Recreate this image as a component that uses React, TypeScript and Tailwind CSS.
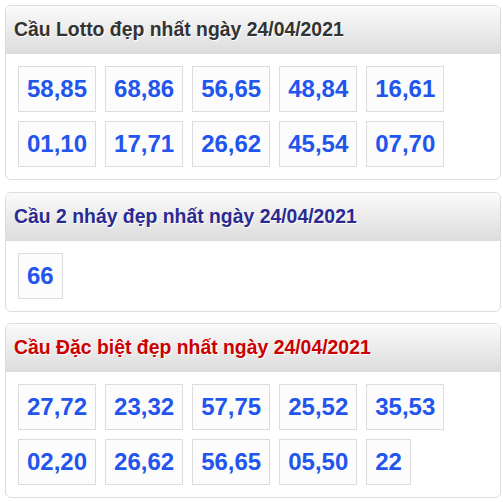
import React from 'react';

interface CauPanel {
  title: string;
  titleClass: string;
  numbers: string[];
  spacing: string;
}

const panels: CauPanel[] = [
  {
    title: 'Cầu Lotto đẹp nhất ngày 24/04/2021',
    titleClass: 'text-[#333333]',
    numbers: ['58,85', '68,86', '56,65', '48,84', '16,61', '01,10', '17,71', '26,62', '45,54', '07,70'],
    spacing: 'mb-[12px]',
  },
  {
    title: 'Cầu 2 nháy đẹp nhất ngày 24/04/2021',
    titleClass: 'text-[#2a2a92]',
    numbers: ['66'],
    spacing: 'mb-[11px]',
  },
  {
    title: 'Cầu Đặc biệt đẹp nhất ngày 24/04/2021',
    titleClass: 'text-[#cc0000]',
    numbers: ['27,72', '23,32', '57,75', '25,52', '35,53', '02,20', '26,62', '56,65', '05,50', '22'],
    spacing: 'mb-0',
  },
];

const App: React.FC = () => {
  return (
    <div className="w-[503px] pt-[5px] pl-[5px] font-['Liberation_Sans',Arial,sans-serif] bg-white">
      {panels.map((panel, i) => (
        <div
          key={i}
          className={`w-[496px] border border-[#dddddd] rounded-[6px] overflow-hidden bg-white ${panel.spacing}`}
        >
          <div className="h-[48px] flex items-center pl-[8px] bg-gradient-to-b from-[#fbfbfb] to-[#dcdcdc]">
            <h2
              className={`text-[19.4px] font-bold leading-none [text-shadow:1px_1px_0_#ffffff] ${panel.titleClass}`}
            >
              {panel.title}
            </h2>
          </div>
          <div className="flex flex-wrap gap-[9px] p-[12px]">
            {panel.numbers.map((n) => (
              <div
                key={n}
                className="h-[46px] px-[8px] flex items-center justify-center border border-[#dddddd] bg-[#fcfcfc] text-[24px] font-bold text-[#2255ee]"
              >
                {n}
              </div>
            ))}
          </div>
        </div>
      ))}
    </div>
  );
};

export default App;
